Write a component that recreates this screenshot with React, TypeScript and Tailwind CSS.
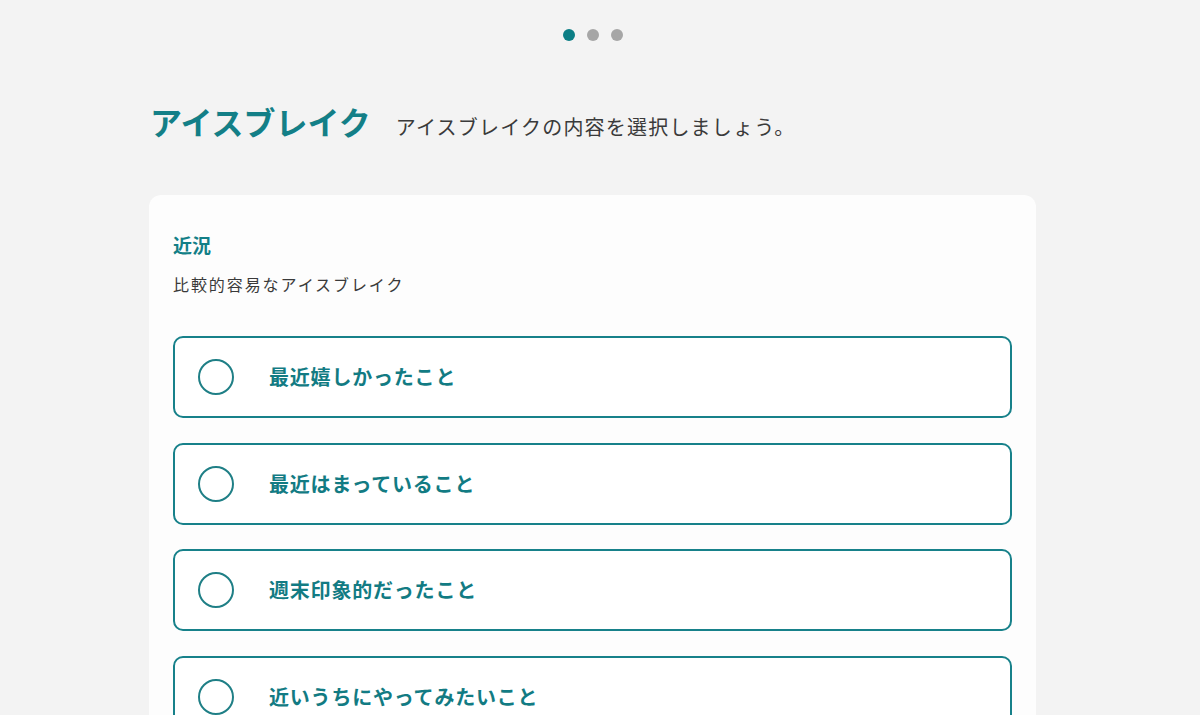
const FONT = "font-['Noto_Sans_CJK_JP','Noto_Sans',sans-serif]";

const OPTIONS = [
  '最近嬉しかったこと',
  '最近はまっていること',
  '週末印象的だったこと',
  '近いうちにやってみたいこと',
];

function Dots() {
  return (
    <div className="flex items-center justify-center gap-[12px] pt-[29px]">
      <span className="h-[12px] w-[12px] rounded-full bg-[#0b7e85]" />
      <span className="h-[12px] w-[12px] rounded-full bg-[#a6a6a6]" />
      <span className="h-[12px] w-[12px] rounded-full bg-[#a6a6a6]" />
    </div>
  );
}

function Option({ label }: { label: string }) {
  return (
    <div className="flex h-[82px] items-center rounded-[10px] border-2 border-[#17818a] bg-white pl-[23px]">
      <span className="h-[36px] w-[36px] shrink-0 rounded-full border-2 border-[#1f7f86]" />
      <span className="ml-[35px] text-[20px] font-bold tracking-[0.04em] text-[#127b83]">
        {label}
      </span>
    </div>
  );
}

export default function App() {
  return (
    <div className={`${FONT} min-h-[715px] w-full overflow-hidden bg-[#f3f3f3]`}>
      <div className="mx-auto h-[715px] w-[1185px] overflow-hidden pl-[15px] pr-[15px] mr-[15px]">
        <Dots />
        <div className="mx-auto w-[887px]">
          <div className="mt-[56px] flex items-baseline gap-[25px] pl-[1px]">
            <h1 className="text-[32px] font-bold leading-[48px] text-[#137f87]">アイスブレイク</h1>
            <p className="text-[20px] leading-[30px] tracking-[0.06em] text-[#3a3a3a]">
              アイスブレイクの内容を選択しましょう。
            </p>
          </div>
          <div className="mt-[50px] rounded-[12px] bg-[#fdfdfd] px-[24px] pt-[36px] pb-[40px]">
            <h2 className="text-[19px] font-bold leading-[28px] text-[#137f87]">近況</h2>
            <p className="mt-[13px] text-[16px] leading-[24px] tracking-[0.12em] text-[#3a3a3a]">
              比較的容易なアイスブレイク
            </p>
            <div className="mt-[40px] flex flex-col gap-[24.5px]">
              {OPTIONS.map((o) => (
                <Option key={o} label={o} />
              ))}
            </div>
          </div>
        </div>
      </div>
    </div>
  );
}
